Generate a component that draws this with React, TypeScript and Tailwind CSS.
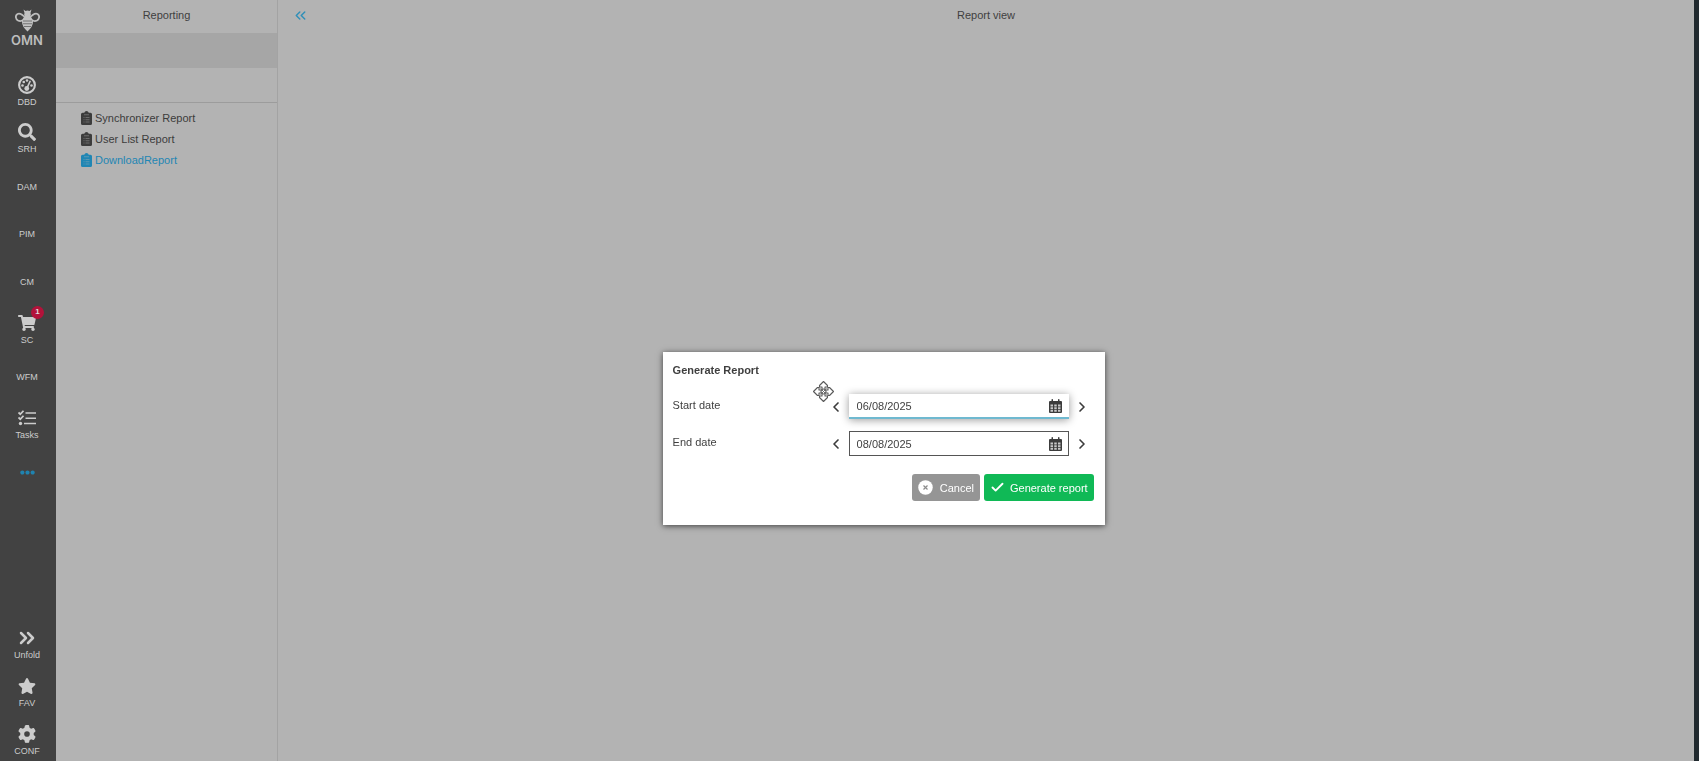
import React from "react";
import { FaSearch, FaShoppingCart, FaEllipsisH, FaStar } from "react-icons/fa";
import { FaGear } from "react-icons/fa6";
import { Check, ChevronLeft, ChevronRight, ChevronsLeft, ChevronsRight } from "lucide-react";

function BeeLogo() {
  return (
    <svg viewBox="0 0 50 46" className="h-[23px] w-[25px]" aria-hidden="true">
      <g fill="none" stroke="#bdbdbd" strokeWidth="3.6">
        <path d="M22 19C16 12 9 8 5 10C0 13 1 20 6 23C10 25 17 23 22 19Z" />
        <path d="M28 19C34 12 41 8 45 10C50 13 49 20 44 23C40 25 33 23 28 19Z" />
      </g>
      <path
        d="M17 1L21 4Q25 2 29 4L33 1L31 8Q33 12 30 15Q36 19 36 26Q36 35 25 45Q14 35 14 26Q14 19 20 15Q17 12 19 8Z"
        fill="#c2c2c2"
      />
      <path d="M16 24H34M16 29.500H34M18 35H32" stroke="#6a6a6a" strokeWidth="1.800" />
    </svg>
  );
}

function GaugeIcon() {
  return (
    <svg viewBox="0 0 36 36" className="h-[18px] w-[18px]" aria-hidden="true">
      <circle cx="18" cy="18" r="15.800" fill="none" stroke="currentColor" strokeWidth="4.200" />
      <g fill="currentColor">
        <circle cx="9" cy="19" r="2.600" />
        <circle cx="11.500" cy="12" r="2.600" />
        <circle cx="18" cy="9" r="2.600" />
        <circle cx="27" cy="19" r="2.600" />
        <circle cx="17.500" cy="25" r="4.800" />
      </g>
      <path d="M18 24L24 11" stroke="currentColor" strokeWidth="3.400" strokeLinecap="round" />
    </svg>
  );
}

function TasksIcon() {
  return (
    <svg viewBox="0 0 36 32" className="h-4 w-[18px]" aria-hidden="true">
      <g fill="none" stroke="currentColor">
        <path d="M1 5L4.500 8.500L11 1.500M1 15L4.500 18.500L11 11.500" strokeWidth="3.600" />
        <path d="M15 6H36M15 16.500H36M12 27H36" strokeWidth="3.200" />
      </g>
      <circle cx="5" cy="27" r="3.400" fill="currentColor" />
    </svg>
  );
}

function ClipboardIcon() {
  return (
    <svg viewBox="0 0 22 28" className="h-[14px] w-[11px] shrink-0" aria-hidden="true">
      <path
        d="M3 3.500H6.500Q7.500 0 11 0Q14.500 0 15.500 3.500H19Q22 3.500 22 6.500V25Q22 28 19 28H3Q0 28 0 25V6.500Q0 3.500 3 3.500Z"
        fill="currentColor"
      />
      <g stroke="#b3b3b3" strokeOpacity="0.5" strokeWidth="1.600" fill="none">
        <path d="M6 7.500H16" />
        <path d="M5 13H7M9 13H17M5 17.500H7M9 17.500H17M5 22H7M9 22H17" />
      </g>
    </svg>
  );
}

function CalendarIcon() {
  return (
    <svg viewBox="0 0 26 28" className="h-[14px] w-[13px]" aria-hidden="true">
      <path
        d="M2 4H5V1.500Q5 0 6.500 0Q8 0 8 1.500V4H18V1.500Q18 0 19.500 0Q21 0 21 1.500V4H24Q26 4 26 6V26Q26 28 24 28H2Q0 28 0 26V6Q0 4 2 4Z"
        fill="#3c3c3c"
      />
      <g fill="#c9c9c9">
        <path d="M3 11H8V15H3ZM10.500 11H15.500V15H10.500ZM18 11H23V15H18Z" />
        <path d="M3 16.500H8V20.500H3ZM10.500 16.500H15.500V20.500H10.500ZM18 16.500H23V20.500H18Z" />
        <path d="M3 22H8V25.500H3ZM10.500 22H15.500V25.500H10.500ZM18 22H23V25.500H18Z" />
      </g>
    </svg>
  );
}

function CancelIcon() {
  return (
    <svg viewBox="0 0 30 30" className="h-[15px] w-[15px]" aria-hidden="true">
      <circle cx="15" cy="15" r="14.500" fill="#fff" />
      <path d="M11 11L19 19M19 11L11 19" stroke="#8c8c8c" strokeWidth="2.400" />
    </svg>
  );
}

function MoveCursor() {
  return (
    <svg viewBox="0 0 42 42" className="absolute left-[150px] top-[29px] h-[21px] w-[21px]" aria-hidden="true">
      <g fill="#fff" stroke="#5a5a5a" strokeWidth="2.200" strokeLinejoin="round">
        <path d="M21 1L29 9V12H24V18H30V13H33L41 21L33 29H30V24H24V30H29V33L21 41L13 33V30H18V24H12V29H9L1 21L9 13H12V18H18V12H13V9Z" />
        <circle cx="21" cy="21" r="5" />
      </g>
      <path d="M15 15L27 27M27 15L15 27" stroke="#6a6a6a" strokeWidth="2" />
    </svg>
  );
}

type NavProps = { label: string; icon?: React.ReactNode; badge?: string };

function NavItem({ label, icon, badge }: NavProps) {
  return (
    <a href="#" className="relative flex w-full flex-col items-center justify-center gap-[2px] text-[#cccccc]">
      {icon && <span className="flex h-[18px] items-center text-lg leading-none">{icon}</span>}
      <span className="text-[9px] leading-3">{label}</span>
      {badge && (
        <span className="absolute left-[31px] top-0 flex h-[13px] w-[13px] items-center justify-center rounded-full bg-[#b3123a] text-[8px] font-bold leading-none text-[#dddddd]">
          {badge}
        </span>
      )}
    </a>
  );
}

function DateRow({ id, label, value, focused }: { id: string; label: string; value: string; focused?: boolean }) {
  return (
    <div className="flex h-[25px] items-center">
      <label htmlFor={id} className="flex-1 pb-[3px] text-[#3f3f3f]">
        {label}
      </label>
      <button type="button" aria-label={`Previous day, ${label}`} className="flex w-[26px] justify-center text-[#3c3c3c]">
        <ChevronLeft size={16} strokeWidth={2.5} />
      </button>
      <div
        className={
          focused
            ? "flex h-[25px] w-[220px] items-center border-b-2 border-[#6fb9d0] bg-white pl-2 pr-[7px] shadow-[0_1px_8px_rgba(0,0,0,0.4)]"
            : "flex h-[25px] w-[220px] items-center border border-[#555555] bg-white pl-[7px] pr-[6px]"
        }
      >
        <input id={id} type="text" defaultValue={value} className="min-w-0 flex-1 bg-transparent text-[#3f3f3f] outline-none" />
        <button type="button" aria-label={`Choose ${label}`}>
          <CalendarIcon />
        </button>
      </div>
      <button type="button" aria-label={`Next day, ${label}`} className="flex w-[26px] justify-center text-[#3c3c3c]">
        <ChevronRight size={16} strokeWidth={2.5} />
      </button>
    </div>
  );
}

export default function App() {
  return (
    <div className="relative flex h-screen overflow-hidden bg-[#b3b3b3] font-['Liberation_Sans',Arial,sans-serif] text-[11px] leading-4 text-[#3f3f3f]">
      <nav className="flex w-14 shrink-0 flex-col bg-[#424242] pr-[2px]">
        <a href="#" className="flex h-[68px] flex-col items-center pt-[9px]">
          <BeeLogo />
          <span className="font-['Inter',sans-serif] text-[13px] font-semibold leading-4 text-[#bdbdbd]">OMN</span>
        </a>
        <div className="grid h-[428px] grid-rows-9">
          <NavItem label="DBD" icon={<GaugeIcon />} />
          <NavItem label="SRH" icon={<FaSearch />} />
          <NavItem label="DAM" />
          <NavItem label="PIM" />
          <NavItem label="CM" />
          <NavItem label="SC" icon={<FaShoppingCart />} badge="1" />
          <NavItem label="WFM" />
          <NavItem label="Tasks" icon={<TasksIcon />} />
          <button type="button" aria-label="More" className="flex items-center justify-center text-[15px] text-[#1f83b0]">
            <FaEllipsisH />
          </button>
        </div>
        <div className="mt-auto flex flex-col gap-4 pb-1">
          <NavItem label="Unfold" icon={<ChevronsRight size={24} strokeWidth={2.5} />} />
          <NavItem label="FAV" icon={<FaStar />} />
          <NavItem label="CONF" icon={<FaGear />} />
        </div>
      </nav>

      <aside className="flex w-[222px] shrink-0 flex-col border-r border-[#a3a3a3]">
        <h2 className="flex h-[33px] items-center justify-center pb-1">Reporting</h2>
        <div className="h-[35px] bg-[#a6a6a6]" />
        <div className="h-[35px] border-b border-[#9c9c9c]" />
        <ul className="flex flex-col gap-[5px] pl-[25px] pt-[7px]">
          {["Synchronizer Report", "User List Report", "DownloadReport"].map((name) => (
            <li key={name}>
              <a
                href="#"
                className={
                  name === "DownloadReport"
                    ? "flex items-center gap-[3px] text-[#1f86b4]"
                    : "flex items-center gap-[3px] text-[#3c3c3c]"
                }
              >
                <ClipboardIcon />
                {name}
              </a>
            </li>
          ))}
        </ul>
      </aside>

      <main className="relative min-w-0 flex-1">
        <header className="flex h-[33px] items-center justify-center pb-1">
          <h1>Report view</h1>
        </header>
        <button type="button" aria-label="Collapse panel" className="absolute left-[14px] top-[7px] text-[#2f8fb8]">
          <ChevronsLeft size={17} strokeWidth={2} />
        </button>
      </main>
      <div className="w-[5px] shrink-0 bg-[#20292e]" />

      <section
        role="dialog"
        aria-labelledby="dialog-title"
        className="fixed left-[39%] top-[352px] w-[442px] bg-white px-[10px] pb-6 pt-[10px] shadow-[0_1px_6px_rgba(0,0,0,0.65)]"
      >
        <h3 id="dialog-title" className="font-bold">
          Generate Report
        </h3>
        <MoveCursor />
        <form className="mt-4 flex flex-col gap-3" onSubmit={(e) => e.preventDefault()}>
          <DateRow id="start-date" label="Start date" value="06/08/2025" focused />
          <DateRow id="end-date" label="End date" value="08/08/2025" />
          <div className="mt-[6px] flex justify-end gap-1 pr-px">
            <button type="button" className="flex h-[27px] items-center gap-[7px] rounded-[3px] bg-[#959595] px-[6px] text-white">
              <CancelIcon />
              Cancel
            </button>
            <button type="submit" className="flex h-[27px] items-center gap-[5px] rounded-[3px] bg-[#10b956] px-[6px] text-white">
              <Check size={15} strokeWidth={3} />
              Generate report
            </button>
          </div>
        </form>
      </section>
    </div>
  );
}
